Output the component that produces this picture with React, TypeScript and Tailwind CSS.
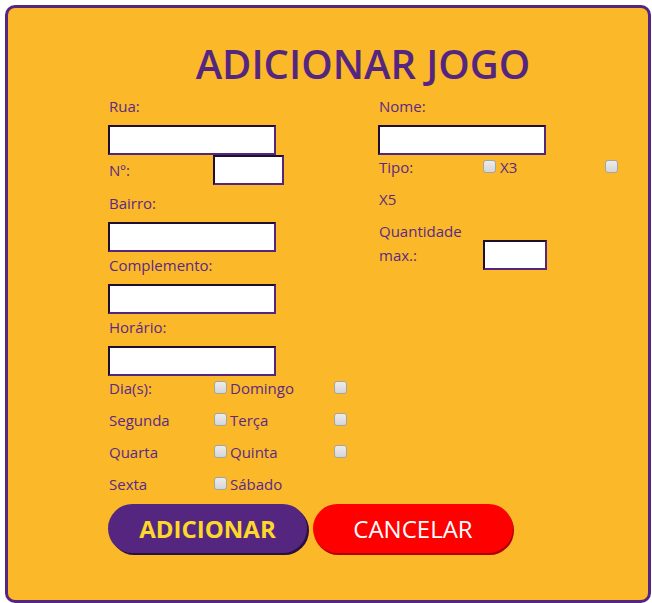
import React from 'react'

const font = { fontFamily: '"Open Sans", "Noto Sans", sans-serif' }

function Box({ className = '' }: { className?: string }) {
  return (
    <input
      type="checkbox"
      className={`appearance-none w-[13px] h-[13px] rounded-[3px] border border-[#a4a4a4] bg-gradient-to-b from-[#ececec] to-[#d6d6d6] shrink-0 ${className}`}
    />
  )
}

function Field({ className = '' }: { className?: string }) {
  return (
    <input
      type="text"
      className={`block h-[30px] bg-white border-[2px] border-t-[#1e0f30] border-l-[#1e0f30] border-b-[#55267f] border-r-[#55267f] outline-none ${className}`}
    />
  )
}

const DAYS: [string, string][] = [
  ['Dia(s):', 'Domingo'],
  ['Segunda', 'Terça'],
  ['Quarta', 'Quinta'],
  ['Sexta', 'Sábado'],
]

export default function App() {
  return (
    <div className="w-[652px] h-[603px] bg-white pt-[5px] pl-[5px]" style={font}>
      <div className="w-[646px] h-[598px] bg-[#fbb829] border-[3px] border-[#55267f] rounded-[10px] text-[#5a2a86] text-[15px] leading-[20px]">
        <h1 className="pl-[70px] pt-[33px] text-center text-[40px] leading-[46px] font-semibold text-[#55267f]">
          ADICIONAR JOGO
        </h1>

        <div className="flex pl-[100px] pt-[9px]">
          {/* left column */}
          <div className="w-[270px]">
            <p className="pl-[1px]">Rua:</p>
            <Field className="mt-[9px] w-[168px]" />
            <div className="flex items-center h-[30px]">
              <span className="w-[105px] pl-[1px]">Nº:</span>
              <Field className="w-[71px]" />
            </div>
            <p className="pl-[1px] pt-[8px]">Bairro:</p>
            <Field className="mt-[9px] w-[168px]" />
            <p className="pl-[1px] pt-[3px]">Complemento:</p>
            <Field className="mt-[9px] w-[168px]" />
            <p className="pl-[1px] pt-[3px]">Horário:</p>
            <Field className="mt-[9px] w-[168px]" />

            <div className="grid grid-cols-[106px_120px_auto] gap-y-[12px] pt-[2px]">
              {DAYS.map(([a, b], i) => (
                <React.Fragment key={a}>
                  <span className="pl-[1px]">{a}</span>
                  <span className="flex items-start gap-[3px]">
                    <Box className="mt-[3px]" />
                    {b}
                  </span>
                  <span>{i < 3 && <Box className="mt-[3px]" />}</span>
                </React.Fragment>
              ))}
            </div>
          </div>

          {/* right column */}
          <div className="w-[250px]">
            <p className="pl-[1px]">Nome:</p>
            <Field className="mt-[9px] w-[168px]" />
            <div className="flex items-start pt-[2px]">
              <span className="w-[105px] pl-[1px]">Tipo:</span>
              <Box className="mt-[3px]" />
              <span className="pl-[4px] w-[109px]">X3</span>
              <Box className="mt-[3px]" />
            </div>
            <p className="pl-[1px] pt-[12px]">X5</p>
            <div className="flex pt-[10px]">
              <p className="w-[105px] pl-[1px] leading-[24px]">
                Quantidade
                <br />
                max.:
              </p>
              <Field className="mt-[21px] w-[64px]" />
            </div>
          </div>
        </div>

        <div className="flex gap-[6px] pl-[100px] pt-[10px]">
          <button className="w-[199px] h-[49px] rounded-full bg-[#55267f] text-[#fcd82b] font-bold text-[24px] shadow-[2px_2px_0_#2a1040]">
            ADICIONAR
          </button>
          <button className="w-[200px] h-[49px] rounded-full bg-[#ff0000] text-white text-[24px] shadow-[1px_2px_0_#b00000]">
            CANCELAR
          </button>
        </div>
      </div>
    </div>
  )
}
